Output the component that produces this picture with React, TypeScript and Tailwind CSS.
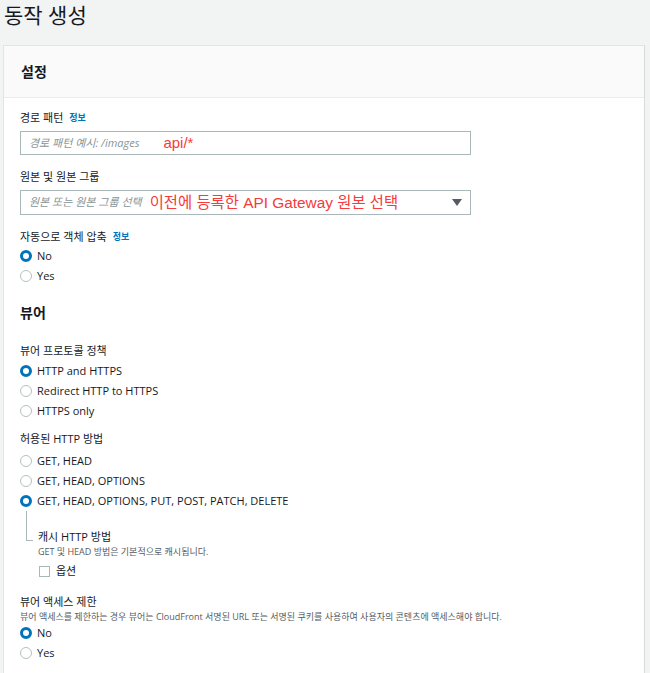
import React from "react";

const F = { fontFamily: '"Open Sans", "Noto Sans CJK KR", sans-serif' };
const RED = { fontFamily: '"Liberation Sans", "Noto Sans CJK KR", sans-serif' };

function Radio({ checked, label }: { checked?: boolean; label: string }) {
  return (
    <div className="flex items-center h-[20px]">
      {checked ? (
        <span className="w-[12px] h-[12px] rounded-full border-[3.5px] border-[#0073bb] bg-white box-border" />
      ) : (
        <span className="w-[12px] h-[12px] rounded-full border border-[#b6c0c1] bg-white box-border" />
      )}
      <span className="ml-[5px] text-[11px] text-[#16191f]">{label}</span>
    </div>
  );
}

function Info() {
  return <span className="ml-[6px] text-[9px] font-bold text-[#0073bb]">정보</span>;
}

export default function App() {
  return (
    <div className="w-[650px] h-[673px] bg-[#f2f3f3] overflow-hidden" style={F}>
      <div className="pl-[4px] h-[45px] text-[21px] leading-[30px] text-[#16191f]">동작 생성</div>
      <div className="ml-[3px] w-[642px] border border-[#e2e5e5] border-r-[#d5dbdb] bg-white">
        <div className="h-[52px] bg-[#fafafa] border-b border-[#eaeded] flex items-center pl-[17px]">
          <span className="text-[14px] font-bold text-[#16191f]">설정</span>
        </div>
        <div className="pl-[16px] pt-[11px] pb-[20px] text-[#16191f]">
          <div className="h-[18px] flex items-center text-[11px]">
            경로 패턴<Info />
          </div>
          <div className="mt-[4px] w-[451px] h-[24px] border border-[#aab7b8] flex items-center pl-[8px]">
            <span className="text-[11px] italic text-[#879596]">경로 패턴 예시: /images</span>
            <span className="ml-[24px] text-[15px] text-[#f53b3b]" style={RED}>
              api/*
            </span>
          </div>
          <div className="mt-[13px] h-[18px] flex items-center text-[11px]">원본 및 원본 그룹</div>
          <div className="mt-[4px] w-[451px] h-[25px] border border-[#aab7b8] flex items-center pl-[8px] pr-[8px]">
            <span className="text-[11px] italic text-[#879596]">원본 또는 원본 그룹 선택</span>
            <span className="ml-[8px] text-[15.4px] text-[#f53b3b]" style={RED}>
              이전에 등록한 API Gateway 원본 선택
            </span>
            <span className="ml-auto w-0 h-0 border-l-[5px] border-r-[5px] border-t-[7px] border-l-transparent border-r-transparent border-t-[#545b64]" />
          </div>
          <div className="mt-[13px] h-[18px] flex items-center text-[11px]">
            자동으로 객체 압축<Info />
          </div>
          <div className="mt-[0px]">
            <Radio checked label="No" />
            <Radio label="Yes" />
          </div>
          <div className="mt-[17px] text-[14px] font-bold h-[20px] leading-[20px]">뷰어</div>
          <div className="mt-[19px] h-[18px] flex items-center text-[11px]">뷰어 프로토콜 정책</div>
          <div className="mt-[1px]">
            <Radio checked label="HTTP and HTTPS" />
            <Radio label="Redirect HTTP to HTTPS" />
            <Radio label="HTTPS only" />
          </div>
          <div className="mt-[9px] h-[18px] flex items-center text-[11px]">허용된 HTTP 방법</div>
          <div className="mt-[3px]">
            <Radio label="GET, HEAD" />
            <Radio label="GET, HEAD, OPTIONS" />
            <Radio checked label="GET, HEAD, OPTIONS, PUT, POST, PATCH, DELETE" />
          </div>
          <div className="pl-[6px] flex">
            <div className="w-[7px] h-[30px] border-l border-b border-[#aab7b8]" />
            <div className="ml-[5px] pt-[18px]">
              <div className="h-[16px] flex items-center text-[11px]">캐시 HTTP 방법</div>
              <div className="h-[14px] flex items-center text-[9px] text-[#545b64]">GET 및 HEAD 방법은 기본적으로 캐시됩니다.</div>
              <div className="h-[23px] flex items-center pl-[1px] pt-[1px]">
                <span className="w-[11px] h-[11px] border border-[#aab7b8] bg-white" />
                <span className="ml-[6px] text-[11px]">옵션</span>
              </div>
            </div>
          </div>
          <div className="mt-[12px] h-[16px] flex items-center text-[11px]">뷰어 액세스 제한</div>
          <div className="h-[13px] flex items-center text-[9px] text-[#545b64]">
            뷰어 액세스를 제한하는 경우 뷰어는 CloudFront 서명된 URL 또는 서명된 쿠키를 사용하여 사용자의 콘텐츠에 액세스해야 합니다.
          </div>
          <div className="mt-[0px]">
            <Radio checked label="No" />
            <Radio label="Yes" />
          </div>
        </div>
      </div>
    </div>
  );
}
